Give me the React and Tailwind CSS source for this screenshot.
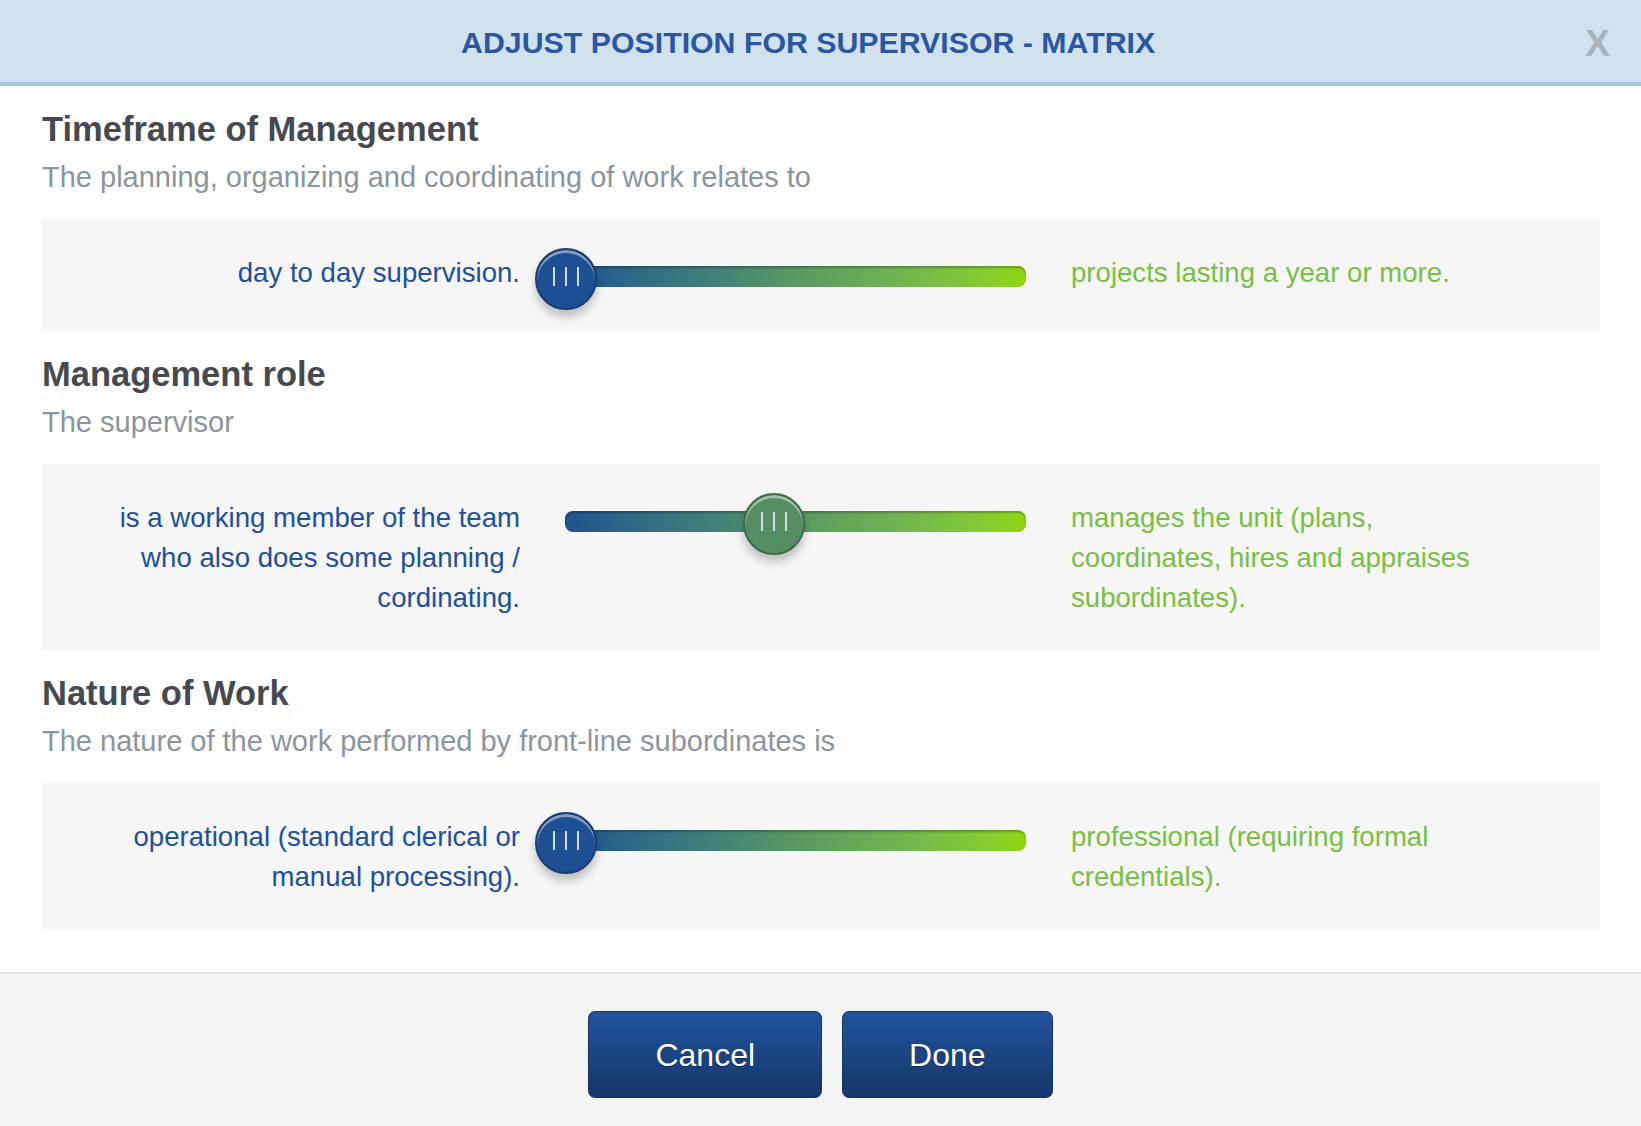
const criteria = [
  {
    title: "Timeframe of Management",
    prompt: "The planning, organizing and coordinating of work relates to",
    low: "day to day supervision.",
    high: "projects lasting a year or more.",
    offset: 0,
    tone: "blue",
  },
  {
    title: "Management role",
    prompt: "The supervisor",
    low: "is a working member of the team who also does some planning / cordinating.",
    high: "manages the unit (plans, coordinates, hires and appraises subordinates).",
    offset: 208,
    tone: "green",
  },
  {
    title: "Nature of Work",
    prompt: "The nature of the work performed by front-line subordinates is",
    low: "operational (standard clerical or manual processing).",
    high: "professional (requiring formal credentials).",
    offset: 0,
    tone: "blue",
  },
];

function Slider({ offset, tone }) {
  const thumb =
    tone === "green"
      ? "bg-[#568e63] border-[#3d6b4a]"
      : "bg-[#1f4f93] border-[#173d75]";
  return (
    <div className="relative h-[46px] w-[491px] shrink-0 ml-[15px]">
      <div className="absolute left-[30px] right-0 top-[13px] h-[21px] rounded-[8px] bg-gradient-to-r from-[#21528f] via-[#5a9862] to-[#8fd708] shadow-[inset_0_2px_2px_rgba(0,0,0,0.25)]" />
      <div
        className={
          "absolute top-[-5px] w-[62px] h-[62px] rounded-full border-2 flex items-center justify-center gap-[10px] pb-[6px] shadow-[inset_0_3px_0_rgba(255,255,255,0.45),0_7px_9px_rgba(0,0,0,0.22)] " +
          thumb
        }
        style={{ left: offset }}
      >
        <span className="block w-[2px] h-[19px] bg-[#d3dcea]" />
        <span className="block w-[2px] h-[19px] bg-[#d3dcea]" />
        <span className="block w-[2px] h-[19px] bg-[#d3dcea]" />
      </div>
    </div>
  );
}

export default function App() {
  return (
    <div className="min-h-screen bg-white font-['Liberation_Sans',Arial,sans-serif]">
      <div className="h-[86px] bg-[#cfe2ee] border-b-4 border-[#a8c8da] flex items-center pt-[4px]">
        <h1 className="flex-1 text-center pl-[31px] text-[30.3px] font-bold text-[#2c55a2] leading-none">
          ADJUST POSITION FOR SUPERVISOR - MATRIX
        </h1>
        <button className="mr-[31px] text-[37px] font-bold text-[#a8b4bb] leading-none">
          X
        </button>
      </div>

      <div className="pl-[42px] pr-[41px]">
        {criteria.map((c) => (
          <div key={c.title} className="pt-[23px]">
            <h2 className="text-[34.5px] leading-[40px] font-bold text-[#464a4f]">
              {c.title}
            </h2>
            <p className="mt-[8px] text-[29px] leading-[40px] text-[#8b959b]">
              {c.prompt}
            </p>
            <div className="mt-[22px] bg-[#f6f6f6] pt-[34px] pb-[32px] flex items-start text-[27.6px] leading-[40px]">
              <div className="w-[478px] shrink-0 pl-[48px] text-right text-[#20509c]">
                {c.low}
              </div>
              <Slider offset={c.offset} tone={c.tone} />
              <div className="ml-[45px] w-[430px] text-[#78c043]">{c.high}</div>
            </div>
          </div>
        ))}
      </div>

      <div className="mt-[43px] border-t-2 border-[#e3e3e3]">
        <div className="mt-px bg-[#f4f4f4] pt-[36px] pb-[29px] flex justify-center gap-[20px]">
          <button className="h-[87px] px-[66px] rounded-[7px] border border-[#13346a] bg-gradient-to-b from-[#21549c] to-[#15366a] text-white text-[32px] [text-shadow:0_1px_1px_rgba(0,0,0,0.35)]">
            Cancel
          </button>
          <button className="h-[87px] px-[66px] rounded-[7px] border border-[#13346a] bg-gradient-to-b from-[#21549c] to-[#15366a] text-white text-[32px] [text-shadow:0_1px_1px_rgba(0,0,0,0.35)]">
            Done
          </button>
        </div>
      </div>
    </div>
  );
}
